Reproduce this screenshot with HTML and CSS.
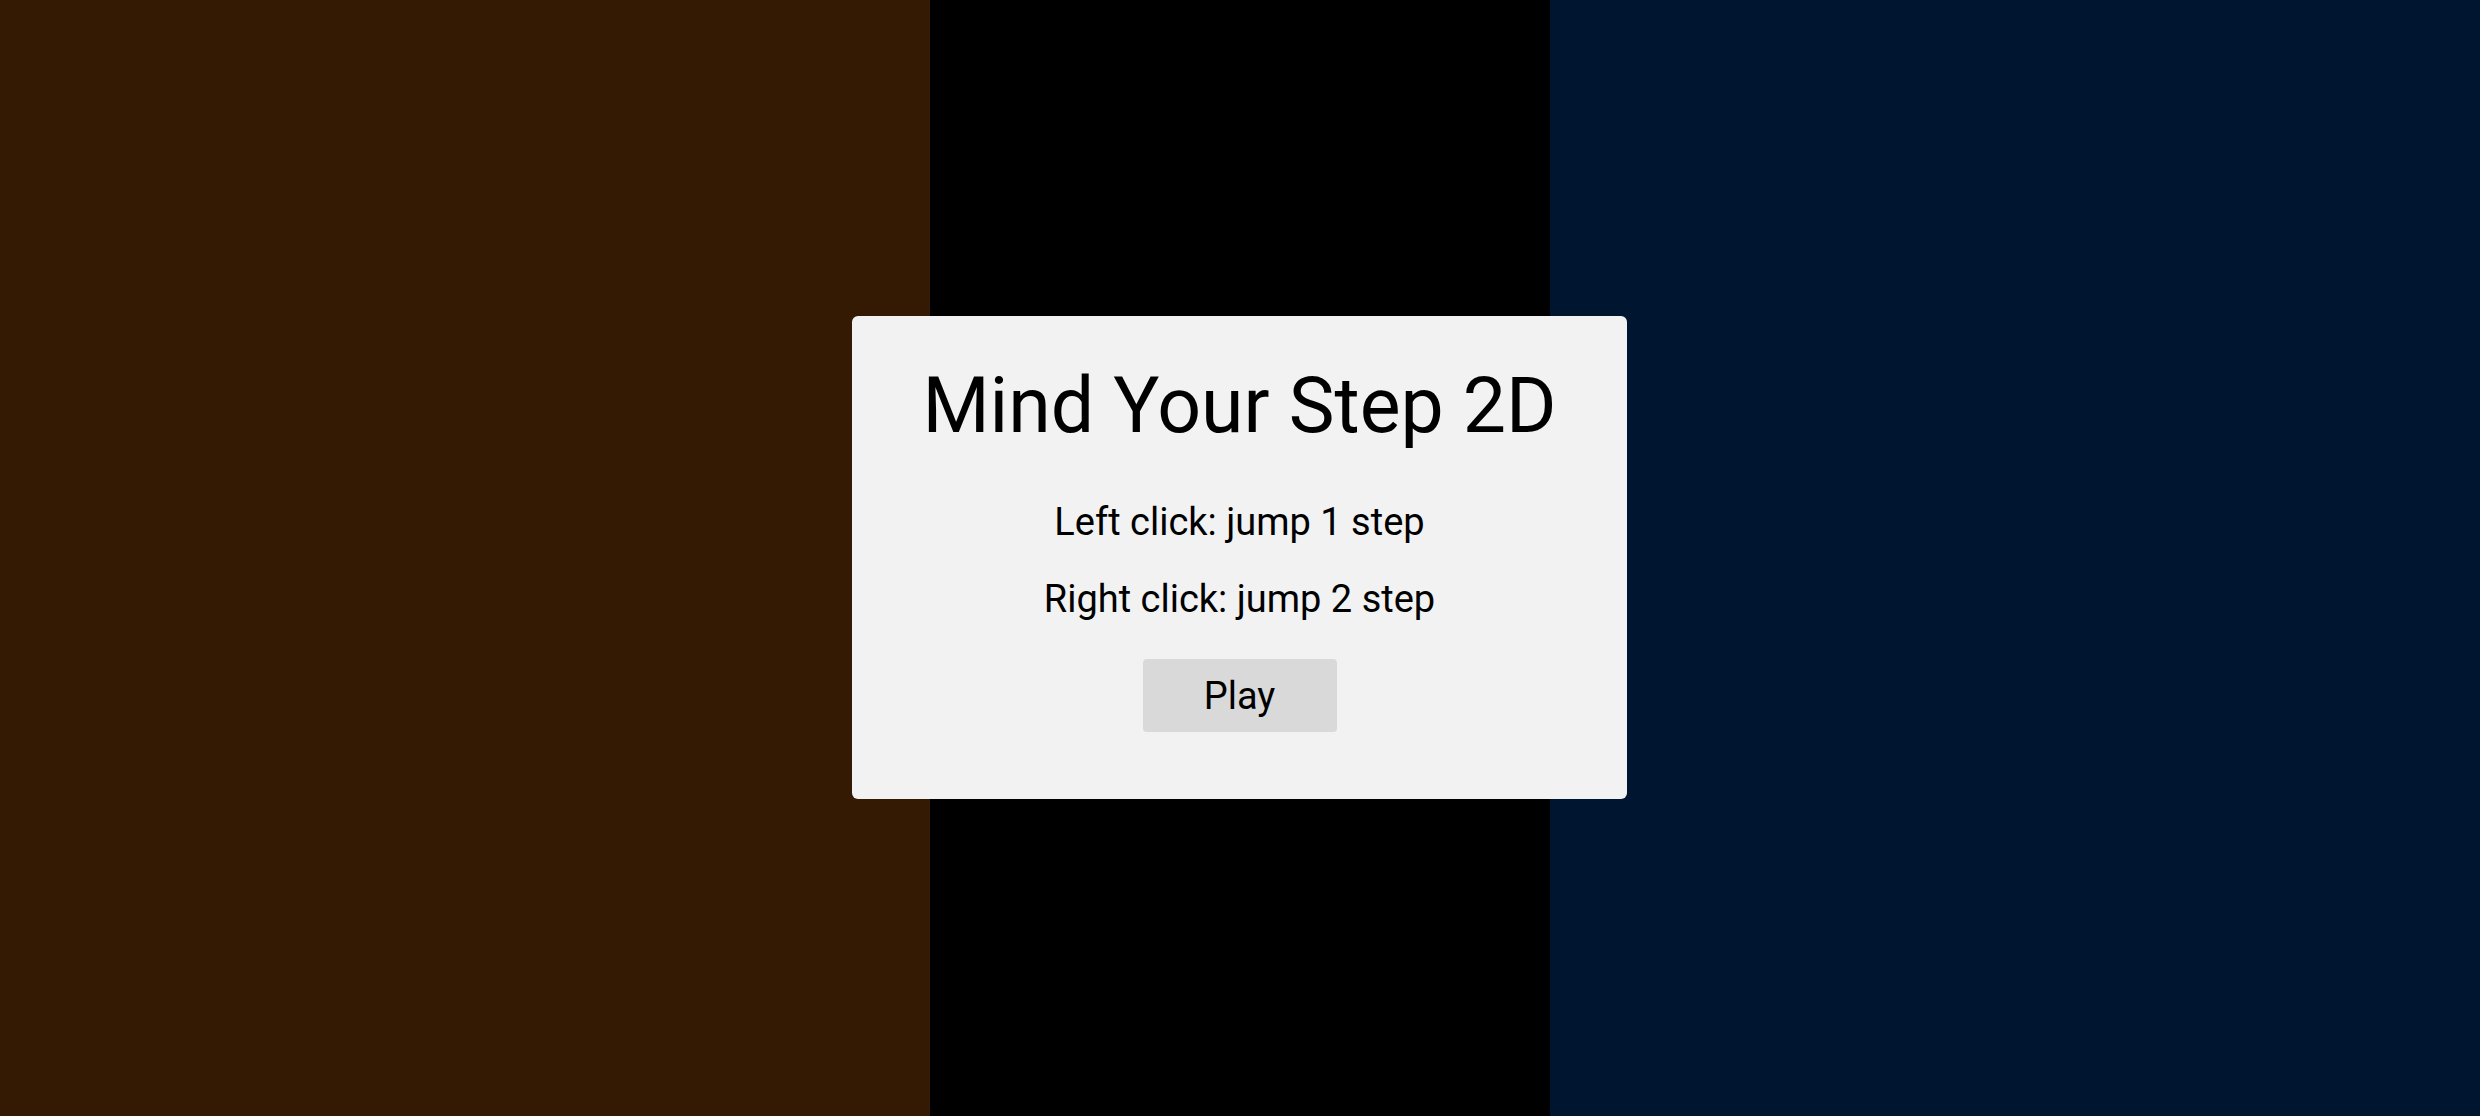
FILE: index.html
```html
<!DOCTYPE html>
<html lang="en">
<head>
    <meta charset="UTF-8">
    <meta name="viewport" content="width=device-width, initial-scale=1.0">
    <title>Mind Your Step 2D</title>
    <link rel="stylesheet" href="styles.css">
</head>
<body>

    <div class="lanes">
        <div class="lane lane-left"></div>
        <div class="lane lane-middle"></div>
        <div class="lane lane-right"></div>
    </div>

    <div class="menu">
        <h1 class="menu-title">Mind Your Step 2D</h1>
        <p class="menu-hint">Left click: jump 1 step</p>
        <p class="menu-hint">Right click: jump 2 step</p>
        <button class="play-button">Play</button>
    </div>

</body>
</html>
```

FILE: styles.css
```css
html, body {
    height: 100%;
}

body {
    font-family: 'Roboto', 'Liberation Sans', sans-serif;
    margin: 0;
    padding: 0;
    overflow: hidden;
}

.lanes {
    display: grid;
    grid-template-columns: 930px 620px 930px;
    height: 100%;
}

.lane-left {
    background-color: #341a02;
}

.lane-middle {
    background-color: #000;
}

.lane-right {
    background-color: #001630;
}

.menu {
    position: absolute;
    top: 316px;
    left: 852px;
    width: 775px;
    height: 483px;
    box-sizing: border-box;
    padding-top: 45px;
    background-color: #f2f2f2;
    border-radius: 6px;
    display: flex;
    flex-direction: column;
    align-items: center;
    color: #000;
}

.menu-title {
    margin: 0 0 49px;
    font-size: 77px;
    font-weight: 400;
    line-height: normal;
}

.menu-hint {
    margin: 0 0 33px;
    font-size: 38px;
    line-height: normal;
}

.menu-hint + .menu-hint {
    margin-bottom: 38px;
}

.play-button {
    width: 194px;
    height: 73px;
    padding: 0;
    background-color: #d9d9d9;
    color: #000;
    border: none;
    border-radius: 4px;
    font-family: inherit;
    font-size: 38px;
    cursor: pointer;
}

.play-button:hover {
    background-color: #cfcfcf;
}
```
